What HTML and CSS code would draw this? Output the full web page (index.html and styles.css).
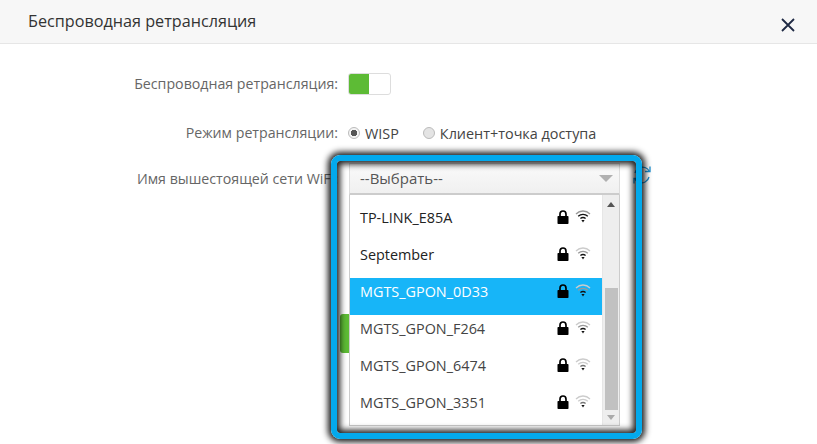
FILE: index.html
```html
<!DOCTYPE HTML>
<html lang="ru">
<head>
    <meta charset="UTF-8">
    <title>Беспроводная ретрансляция</title>
    <link rel="stylesheet" href="styles.css">
</head>
<body>
    <svg class="defs" width="0" height="0">
        <symbol id="lock" viewBox="0 0 12 14">
            <path d="M3 6.5V4.200C3 2.400 4.200 1 6 1s3 1.400 3 3.200v2.300" fill="none" stroke="#000" stroke-width="1.700"/>
            <rect x="0.500" y="6" width="11" height="8" rx="0.800" fill="#000"/>
        </symbol>
    </svg>

    <div class="header">
        <span class="title">Беспроводная ретрансляция</span>
        <svg class="close" width="14" height="14" viewBox="0 0 14 14">
            <path d="M1 1l12 12M13 1L1 13" stroke="#1f2a44" stroke-width="1.800" fill="none"/>
        </svg>
    </div>

    <div class="form">
        <div class="row row-switch">
            <label class="label">Беспроводная ретрансляция:</label>
            <div class="switch"><div class="switch-on"></div></div>
        </div>
        <div class="row row-mode">
            <label class="label">Режим ретрансляции:</label>
            <span class="radio radio-checked"></span>
            <span class="radio-text">WISP</span>
            <span class="radio"></span>
            <span class="radio-text">Клиент+точка доступа</span>
        </div>
        <div class="row row-ssid">
            <label class="label">Имя вышестоящей сети WiFi:</label>
            <div class="select-wrap">
                <div class="select">
                    <span>--Выбрать--</span>
                    <span class="caret"></span>
                </div>
                <div class="dropdown">
                    <ul class="list">
                        <li class="item"><span class="ssid ssid-dark">TP-LINK_E85A</span><svg class="lock"><use href="#lock"/></svg><svg class="wifi lvl3" viewBox="0 0 16 14"><path class="a3" d="M1 5C5 1 11 1 15 5"/><path class="a2" d="M3.200 7.300C6 4.600 10 4.600 12.800 7.300"/><path class="a1" d="M5.400 9.600C7 8.200 9 8.200 10.600 9.600"/><path class="dot" d="M6.400 11h3.200L8 13.400z"/></svg></li>
                        <li class="item"><span class="ssid ssid-dark">September</span><svg class="lock"><use href="#lock"/></svg><svg class="wifi lvl2" viewBox="0 0 16 14"><path class="a3" d="M1 5C5 1 11 1 15 5"/><path class="a2" d="M3.200 7.300C6 4.600 10 4.600 12.800 7.300"/><path class="a1" d="M5.400 9.600C7 8.200 9 8.200 10.600 9.600"/><path class="dot" d="M6.400 11h3.200L8 13.400z"/></svg></li>
                        <li class="item item-active"><span class="ssid">MGTS_GPON_0D33</span><svg class="lock"><use href="#lock"/></svg><svg class="wifi lvl2" viewBox="0 0 16 14"><path class="a3" d="M1 5C5 1 11 1 15 5"/><path class="a2" d="M3.200 7.300C6 4.600 10 4.600 12.800 7.300"/><path class="a1" d="M5.400 9.600C7 8.200 9 8.200 10.600 9.600"/><path class="dot" d="M6.400 11h3.200L8 13.400z"/></svg></li>
                        <li class="item"><span class="ssid">MGTS_GPON_F264</span><svg class="lock"><use href="#lock"/></svg><svg class="wifi lvl2" viewBox="0 0 16 14"><path class="a3" d="M1 5C5 1 11 1 15 5"/><path class="a2" d="M3.200 7.300C6 4.600 10 4.600 12.800 7.300"/><path class="a1" d="M5.400 9.600C7 8.200 9 8.200 10.600 9.600"/><path class="dot" d="M6.400 11h3.200L8 13.400z"/></svg></li>
                        <li class="item"><span class="ssid">MGTS_GPON_6474</span><svg class="lock"><use href="#lock"/></svg><svg class="wifi lvl1" viewBox="0 0 16 14"><path class="a3" d="M1 5C5 1 11 1 15 5"/><path class="a2" d="M3.200 7.300C6 4.600 10 4.600 12.800 7.300"/><path class="a1" d="M5.400 9.600C7 8.200 9 8.200 10.600 9.600"/><path class="dot" d="M6.400 11h3.200L8 13.400z"/></svg></li>
                        <li class="item"><span class="ssid">MGTS_GPON_3351</span><svg class="lock"><use href="#lock"/></svg><svg class="wifi lvl1" viewBox="0 0 16 14"><path class="a3" d="M1 5C5 1 11 1 15 5"/><path class="a2" d="M3.200 7.300C6 4.600 10 4.600 12.800 7.300"/><path class="a1" d="M5.400 9.600C7 8.200 9 8.200 10.600 9.600"/><path class="dot" d="M6.400 11h3.200L8 13.400z"/></svg></li>
                    </ul>
                    <div class="scrollbar">
                        <span class="arrow-up"></span>
                        <div class="track"><div class="thumb"></div></div>
                        <span class="arrow-down"></span>
                    </div>
                </div>
            </div>
            <svg class="refresh" width="20" height="20" viewBox="0 0 20 20">
                <path d="M3 8C4 3.500 9 1 13 2.500c2 .7 3.400 2 4.300 3.800M17 12c-1 4.500-6 7-10 5.500-2-.7-3.400-2-4.300-3.800" fill="none" stroke="#1b8fd0" stroke-width="1.300"/>
                <path d="M18 1.500v5h-5M2 18.500v-5h5" fill="none" stroke="#1b8fd0" stroke-width="1.300"/>
            </svg>
        </div>
        <div class="row row-save">
            <div class="save"></div>
        </div>
    </div>

    <!-- рамка-выделение поверх скриншота -->
    <div class="highlight"></div>
</body>
</html>
```

FILE: styles.css
```css
body {
    margin: 0;
    height: 444px;
    overflow: hidden;
    position: relative;
    background: white;
    font-family: "Open Sans", "Noto Sans", sans-serif;
    font-size: 14.400px;
    color: #555;
}
.defs {
    position: absolute;
}
.header {
    height: 43px;
    display: flex;
    align-items: center;
    justify-content: space-between;
    padding: 0 22px 0 28px;
    background: #f7f7f7;
    border-bottom: 1px solid #e6e6e6;
}
.title {
    font-size: 16.200px;
    color: #333;
    margin-top: -2px;
}
.close {
    margin-top: 7px;
}
.row {
    display: flex;
    align-items: center;
}
.label {
    width: 338px;
    margin-top: -2px;
    box-sizing: border-box;
    text-align: right;
    font-size: 14.200px;
    color: #666;
    flex-shrink: 0;
}
.row-switch {
    margin-top: 29px;
    height: 22px;
}
.switch {
    width: 41px;
    height: 20px;
    margin-left: 10px;
    border: 1px solid #ddd;
    border-radius: 3px;
    background: white;
}
.switch-on {
    width: 20px;
    height: 20px;
    background: #5dbb35;
    border-radius: 2px 0 0 2px;
}
.row-mode {
    margin-top: 27px;
    height: 22px;
}
.radio {
    width: 12px;
    height: 12px;
    margin-left: 10px;
    border: 1px solid #bbb;
    border-radius: 50%;
    background: #e4e4e4;
    box-sizing: border-box;
    flex-shrink: 0;
}
.radio-checked {
    background: radial-gradient(circle, #555 0, #555 3px, #f4f4f4 3.500px);
}
.radio-text {
    margin-left: 5px;
    margin-right: 14px;
    color: #444;
}
.row-ssid {
    margin-top: 19px;
    height: 32px;
    position: relative;
}
.select-wrap {
    width: 271px;
    margin-left: 11px;
    position: relative;
    z-index: 2;
}
.select {
    height: 32px;
    box-sizing: border-box;
    display: flex;
    align-items: center;
    justify-content: space-between;
    padding: 0 6px 1px 10px;
    font-size: 15px;
    background: linear-gradient(#fafafa, #f0f0f0);
    border: 1px solid #ddd;
    border-bottom: 2px solid #ccc;
}
.caret {
    border-left: 7px solid transparent;
    border-right: 7px solid transparent;
    border-top: 7px solid #b0b0b0;
}
.dropdown {
    position: absolute;
    left: 0;
    top: 32px;
    width: 271px;
    height: 231px;
    box-sizing: border-box;
    display: flex;
    background: white;
    border: 1px solid #ccc;
    border-top: none;
}
.list {
    list-style: none;
    margin: 0;
    padding: 9px 0 0;
    width: 253px;
}
.item {
    height: 37px;
    display: flex;
    padding-left: 10px;
    box-sizing: border-box;
    line-height: 28px;
    color: #444;
}
.ssid {
    width: 197px;
}
.ssid-dark {
    color: #222;
}
.item-active {
    background: #17b5f8;
}
.item-active .ssid {
    color: white;
}
.lock {
    width: 12px;
    height: 14px;
    margin-top: 6px;
}
.wifi {
    width: 16px;
    height: 14px;
    margin: 5px 0 0 6px;
    fill: none;
    stroke-width: 1.300;
}
.dot {
    fill: #111;
}
.a1, .a2, .a3 {
    stroke: #ccc;
}
.lvl3 .a1, .lvl3 .a2, .lvl2 .a1 {
    stroke: #111;
}
.lvl3 .a3, .lvl2 .a2 {
    stroke: #999;
}
.lvl1 .a1 {
    stroke: #777;
}
.scrollbar {
    width: 16px;
    background: #eee;
    border-left: 1px solid #e6e6e6;
    display: flex;
    flex-direction: column;
    align-items: center;
}
.arrow-up {
    margin-top: 7px;
    border-left: 4px solid transparent;
    border-right: 4px solid transparent;
    border-bottom: 5px solid #555;
}
.arrow-down {
    margin: 5px 0 5px;
    border-left: 4px solid transparent;
    border-right: 4px solid transparent;
    border-top: 5px solid #aaa;
}
.track {
    flex: 1;
    width: 13px;
    display: flex;
    flex-direction: column;
    justify-content: flex-end;
}
.thumb {
    height: 122px;
    background: #c1c1c1;
}
.refresh {
    margin: -8px 0 0 12px;
}
.row-save {
    margin-top: 119px;
    padding-left: 340px;
}
.save {
    width: 110px;
    height: 39px;
    border-radius: 3px;
    background: #5dbb35;
}
.highlight {
    position: absolute;
    left: 331px;
    top: 155px;
    width: 311px;
    height: 284px;
    box-sizing: border-box;
    border: 6px solid #03a9ec;
    border-radius: 9px;
    box-shadow: 0 0 6px 3px rgba(0, 0, 0, 0.9), inset 0 0 6px 3px rgba(0, 0, 0, 0.9);
    z-index: 3;
}
```
